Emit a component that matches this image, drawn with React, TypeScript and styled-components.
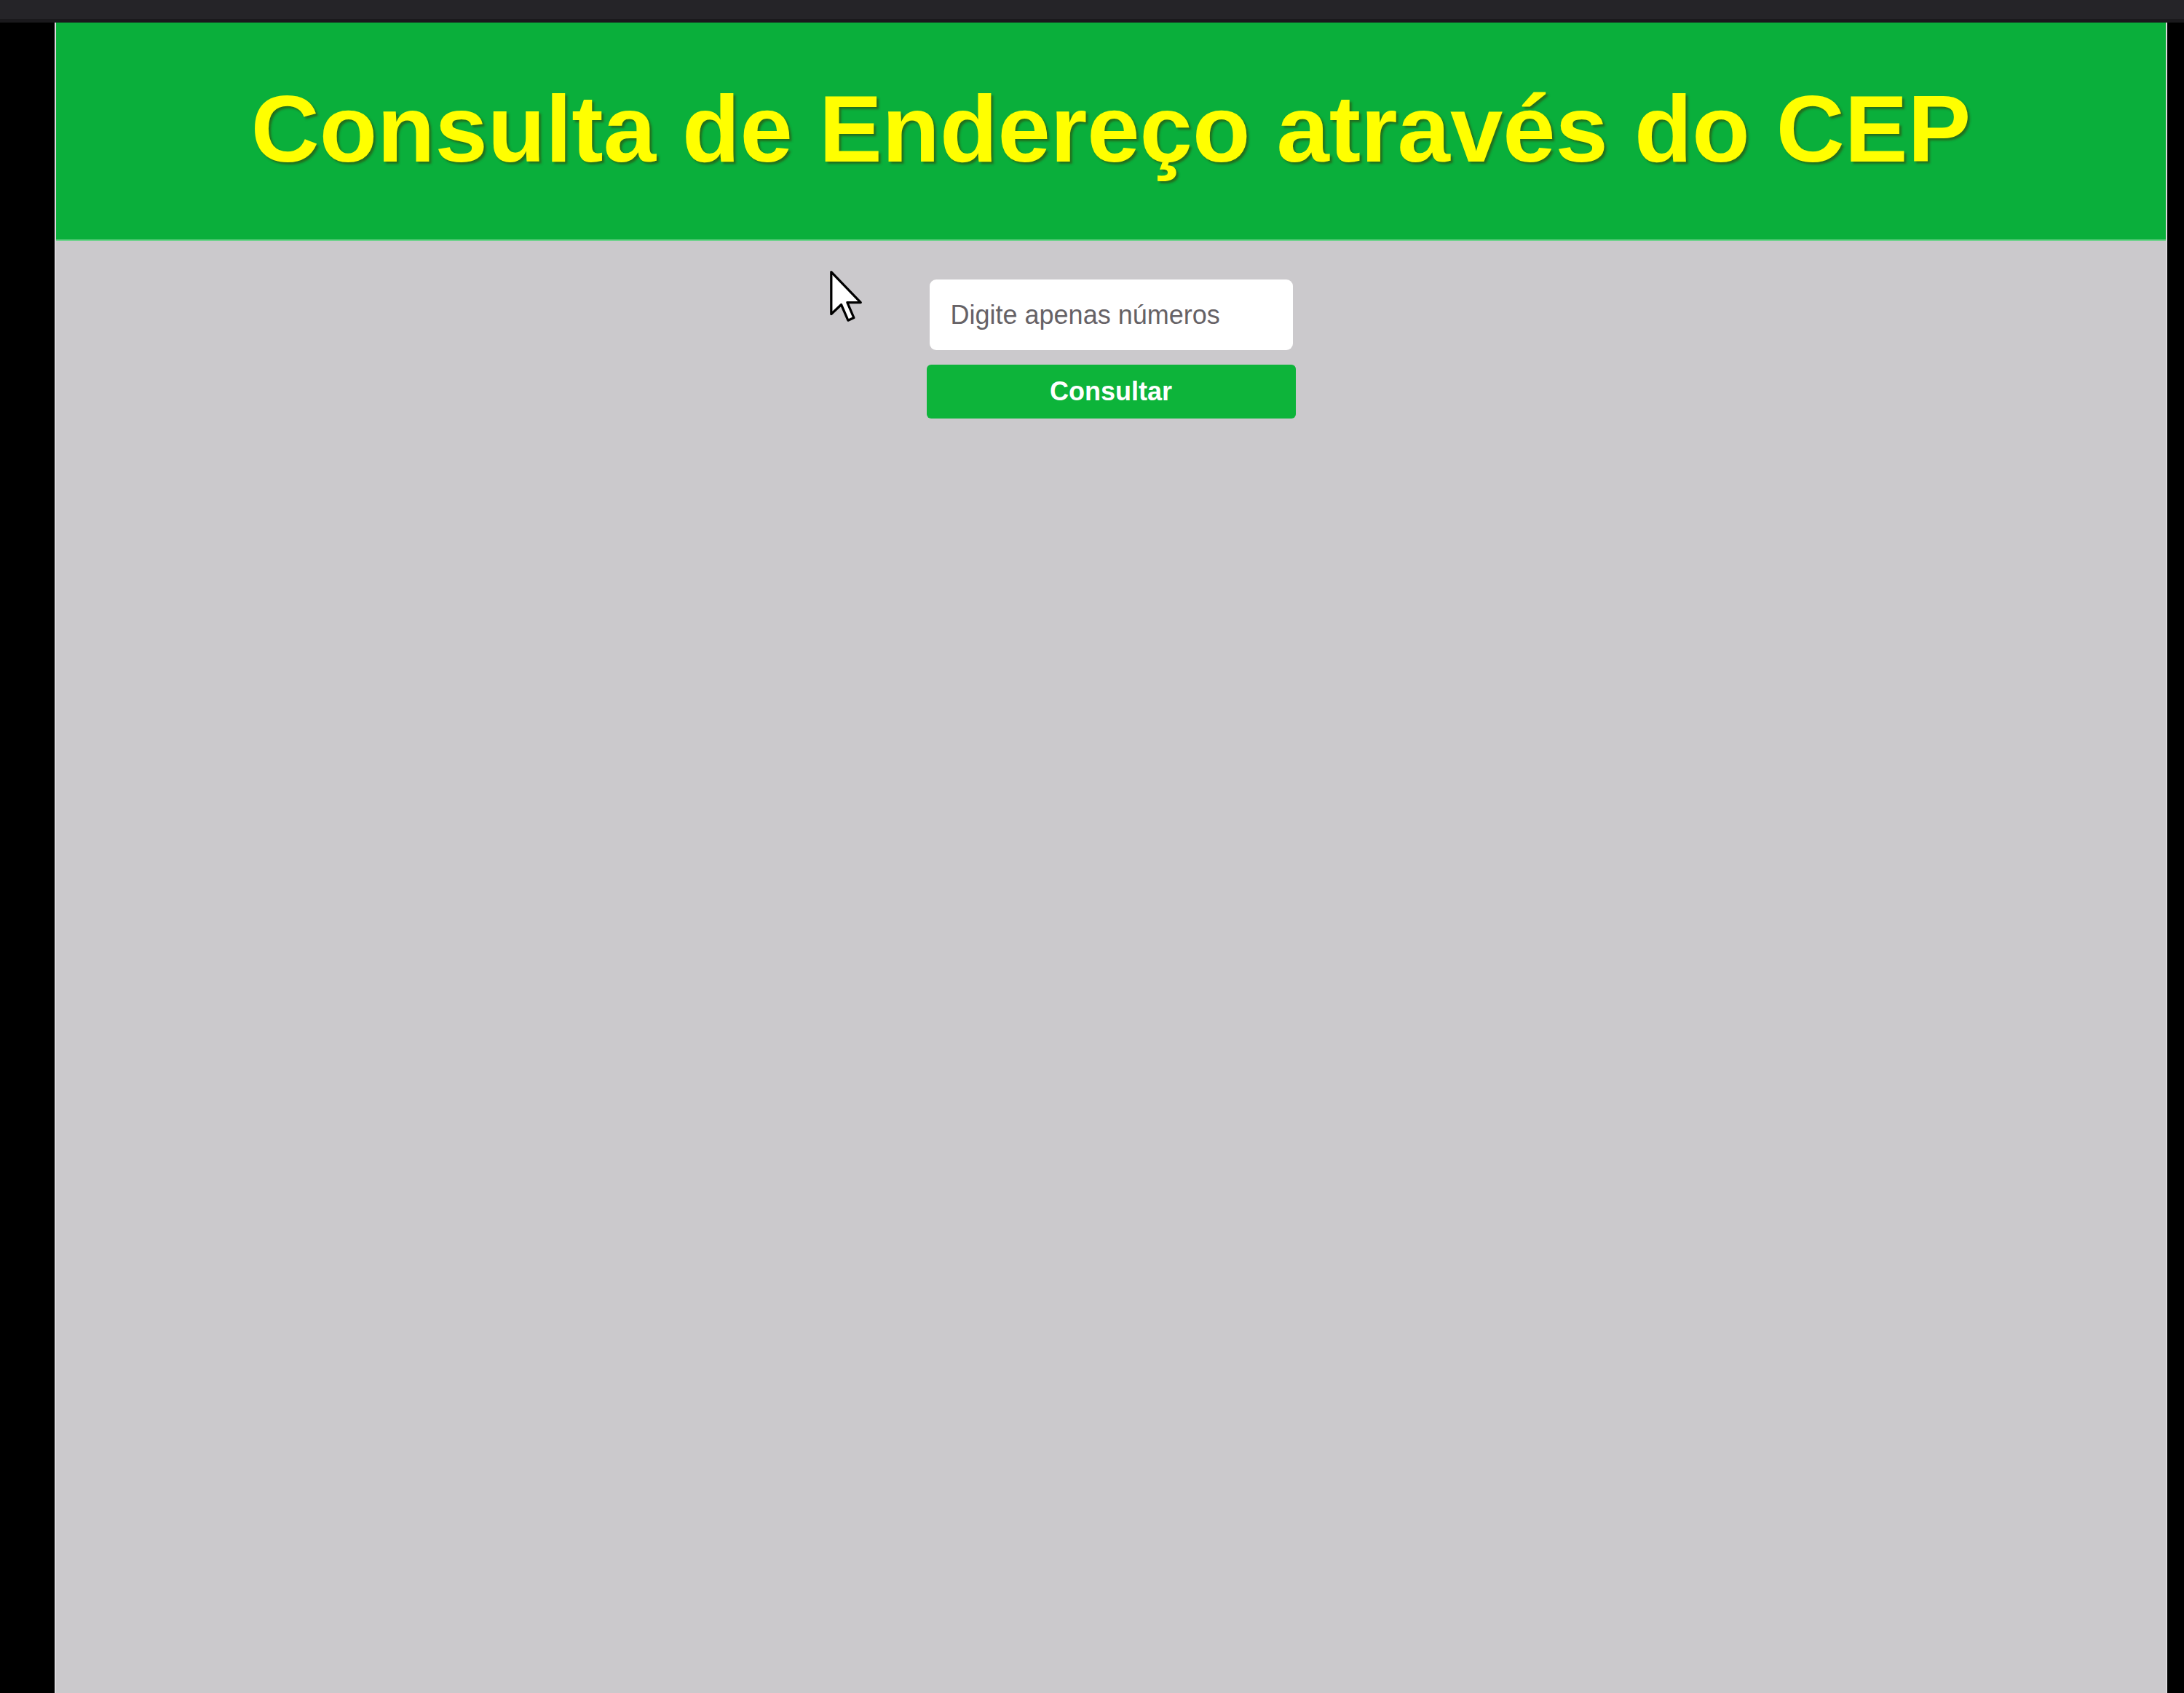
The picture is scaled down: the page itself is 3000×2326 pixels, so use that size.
import React from "react";
import styled, { createGlobalStyle } from "styled-components";

const GlobalStyle = createGlobalStyle`
  html, body {
    margin: 0;
    padding: 0;
    background: #000;
  }
  body {
    font-family: "Liberation Sans", Arial, sans-serif;
  }
  * { box-sizing: border-box; }
`;

const Screen = styled.div`
  width: 3000px;
  height: 2326px;
  display: flex;
  flex-direction: column;
  background: #000;
  overflow: hidden;
  position: relative;
`;

const TopBar = styled.div`
  height: 31px;
  flex: none;
  background: #252428;
  border-bottom: 5px solid #1a191c;
`;

const Body = styled.div`
  flex: 1;
  display: flex;
  min-height: 0;
`;

const Strip = styled.div<{ $w: number }>`
  width: ${(p) => p.$w}px;
  flex: none;
  background: #000;
`;

const Page = styled.div`
  flex: 1;
  display: flex;
  flex-direction: column;
  background: #cbc9cc;
  border-left: 2px solid #dcdadd;
  border-right: 2px solid #dcdadd;
`;

const Header = styled.header`
  height: 300px;
  flex: none;
  background: #0aaf3b;
  border-bottom: 2px solid #6fd28c;
  display: flex;
  align-items: center;
  justify-content: center;
  padding-bottom: 6px;
`;

const Title = styled.h1`
  margin: 0;
  font-family: "Liberation Sans", Arial, sans-serif;
  font-weight: 700;
  font-size: 130px;
  line-height: 1;
  color: #ffff00;
  text-shadow: 3px 3px 3px rgba(60, 45, 0, 0.5);
  white-space: nowrap;
`;

const Main = styled.main`
  flex: 1;
  display: flex;
  flex-direction: column;
  align-items: center;
  padding-top: 53px;
  gap: 20px;
`;

const CepInput = styled.input`
  width: 499px;
  height: 97px;
  border: none;
  border-radius: 9px;
  background: #ffffff;
  padding: 0 29px;
  font-family: "Liberation Sans", Arial, sans-serif;
  font-size: 36px;
  color: #333;
  outline: none;
  &::placeholder {
    color: #666266;
  }
`;

const SubmitButton = styled.button`
  width: 507px;
  height: 74px;
  border: none;
  border-radius: 6px;
  background: #0db43a;
  color: #ffffff;
  font-family: "Liberation Sans", Arial, sans-serif;
  font-weight: 700;
  font-size: 36px;
  cursor: pointer;
`;

const Cursor = styled.svg`
  position: absolute;
  left: 1140px;
  top: 371px;
  width: 47px;
  height: 74px;
  pointer-events: none;
`;

export default function App() {
  return (
    <>
      <GlobalStyle />
      <Screen>
        <TopBar />
        <Body>
          <Strip $w={75} />
          <Page>
            <Header>
              <Title>Consulta de Endereço através do CEP</Title>
            </Header>
            <Main>
              <CepInput type="text" placeholder="Digite apenas números" />
              <SubmitButton type="button">Consultar</SubmitButton>
            </Main>
          </Page>
          <Strip $w={23} />
        </Body>
        <Cursor viewBox="-0.5 -0.5 13 20">
          <path
            d="M0 0 L0 16 L3.8 12.4 L6.4 18.4 L8.6 17.4 L6.1 11.6 L11.2 11.6 Z"
            fill="#ffffff"
            stroke="#000000"
            strokeWidth="0.9"
            strokeLinejoin="round"
          />
        </Cursor>
      </Screen>
    </>
  );
}
